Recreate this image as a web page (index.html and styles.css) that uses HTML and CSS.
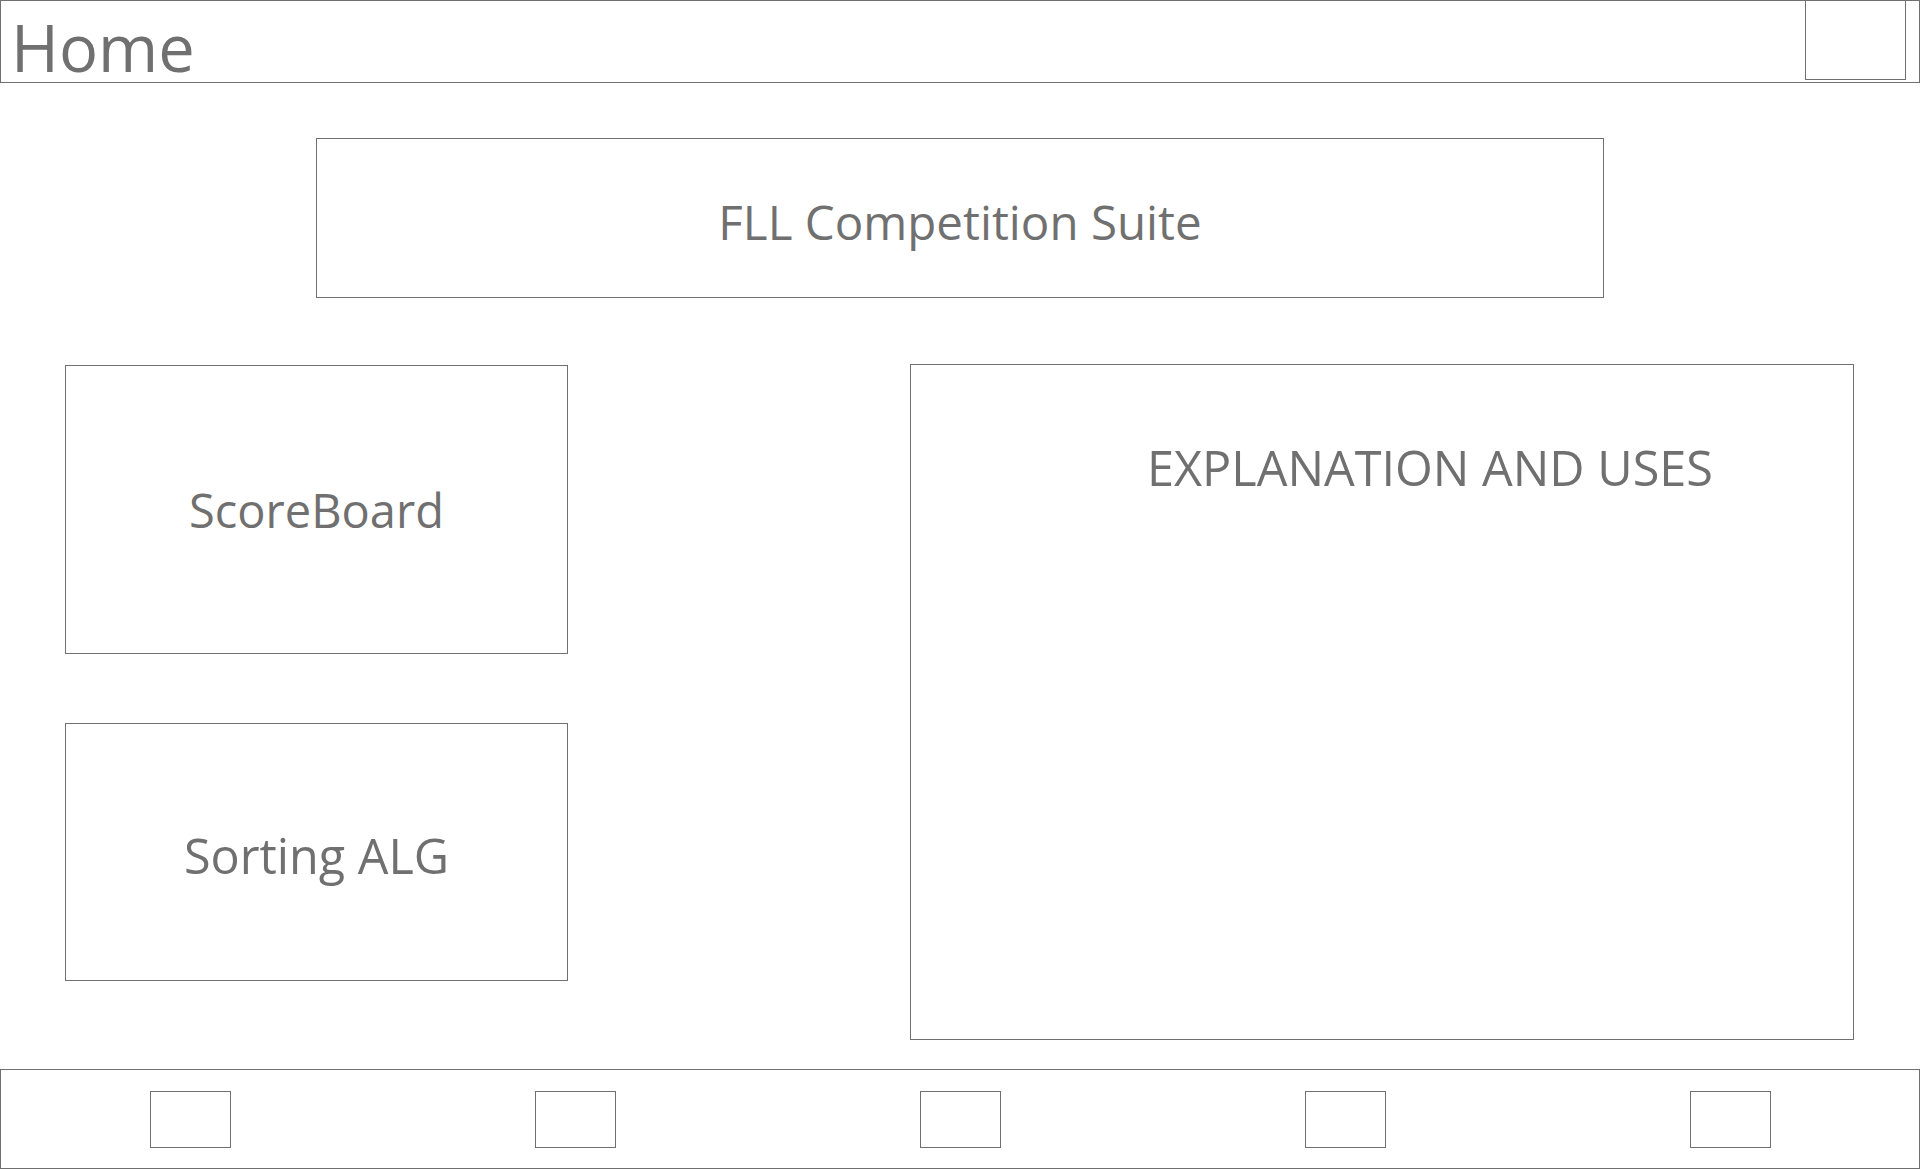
FILE: index.html
```html
<!DOCTYPE html>
<html lang="en">
<head>
<meta charset="utf-8">
<title>Home</title>
<link rel="stylesheet" href="styles.css">
</head>
<body>
<div class="page">
  <header class="topbar">
    <div class="topbar-title">Home</div>
    <div class="topbar-box"></div>
  </header>
  <section class="title-row">
    <div class="title-box">FLL Competition Suite</div>
  </section>
  <main class="content">
    <div class="left-col">
      <div class="card card-score">ScoreBoard</div>
      <div class="card card-sort">Sorting ALG</div>
    </div>
    <div class="explain">
      <div class="explain-title">EXPLANATION AND USES</div>
    </div>
  </main>
  <footer class="footer">
    <div class="foot-btn"></div>
    <div class="foot-btn"></div>
    <div class="foot-btn"></div>
    <div class="foot-btn"></div>
    <div class="foot-btn"></div>
  </footer>
</div>
</body>
</html>
```
FILE: styles.css
```css
* { box-sizing: border-box; }
html, body { margin: 0; padding: 0; background: #ffffff; }
body {
  font-family: "Open Sans", "Noto Sans", sans-serif;
  color: #707070;
}
.page {
  width: 1920px;
  height: 1170px;
  display: flex;
  flex-direction: column;
}
.topbar {
  height: 83px;
  border: 1px solid #707070;
  display: flex;
  justify-content: space-between;
  align-items: flex-start;
}
.topbar-title {
  font-size: 65px;
  line-height: 1;
  padding-left: 10px;
  padding-top: 14px;
}
.topbar-box {
  width: 101px;
  height: 80px;
  margin-top: -1px;
  margin-right: 13px;
  border: 1px solid #707070;
}
.title-row {
  margin-top: 55px;
  padding-left: 316px;
}
.title-box {
  width: 1288px;
  height: 160px;
  border: 1px solid #707070;
  display: flex;
  align-items: center;
  justify-content: center;
  font-size: 47.5px;
  padding-top: 6px;
}
.content {
  margin-top: 66px;
  display: flex;
  align-items: flex-start;
}
.left-col {
  margin-left: 65px;
  margin-top: 1px;
  width: 503px;
  display: flex;
  flex-direction: column;
  gap: 69px;
}
.card {
  border: 1px solid #707070;
  display: flex;
  align-items: center;
  justify-content: center;
}
.card-score { height: 289px; font-size: 47px; }
.card-sort { height: 258px; padding-top: 6px; font-size: 48.5px; }
.explain {
  margin-left: 342px;
  width: 944px;
  height: 676px;
  border: 1px solid #707070;
  padding-left: 236px;
  padding-top: 73px;
}
.explain-title {
  font-size: 48.6px;
  line-height: 1.2;
  white-space: nowrap;
}
.footer {
  margin-top: 29px;
  height: 100px;
  border: 1px solid #707070;
  display: flex;
  justify-content: space-between;
  align-items: flex-start;
  padding: 21px 148px 0 149px;
}
.foot-btn {
  width: 81px;
  height: 57px;
  border: 1px solid #707070;
}
```
